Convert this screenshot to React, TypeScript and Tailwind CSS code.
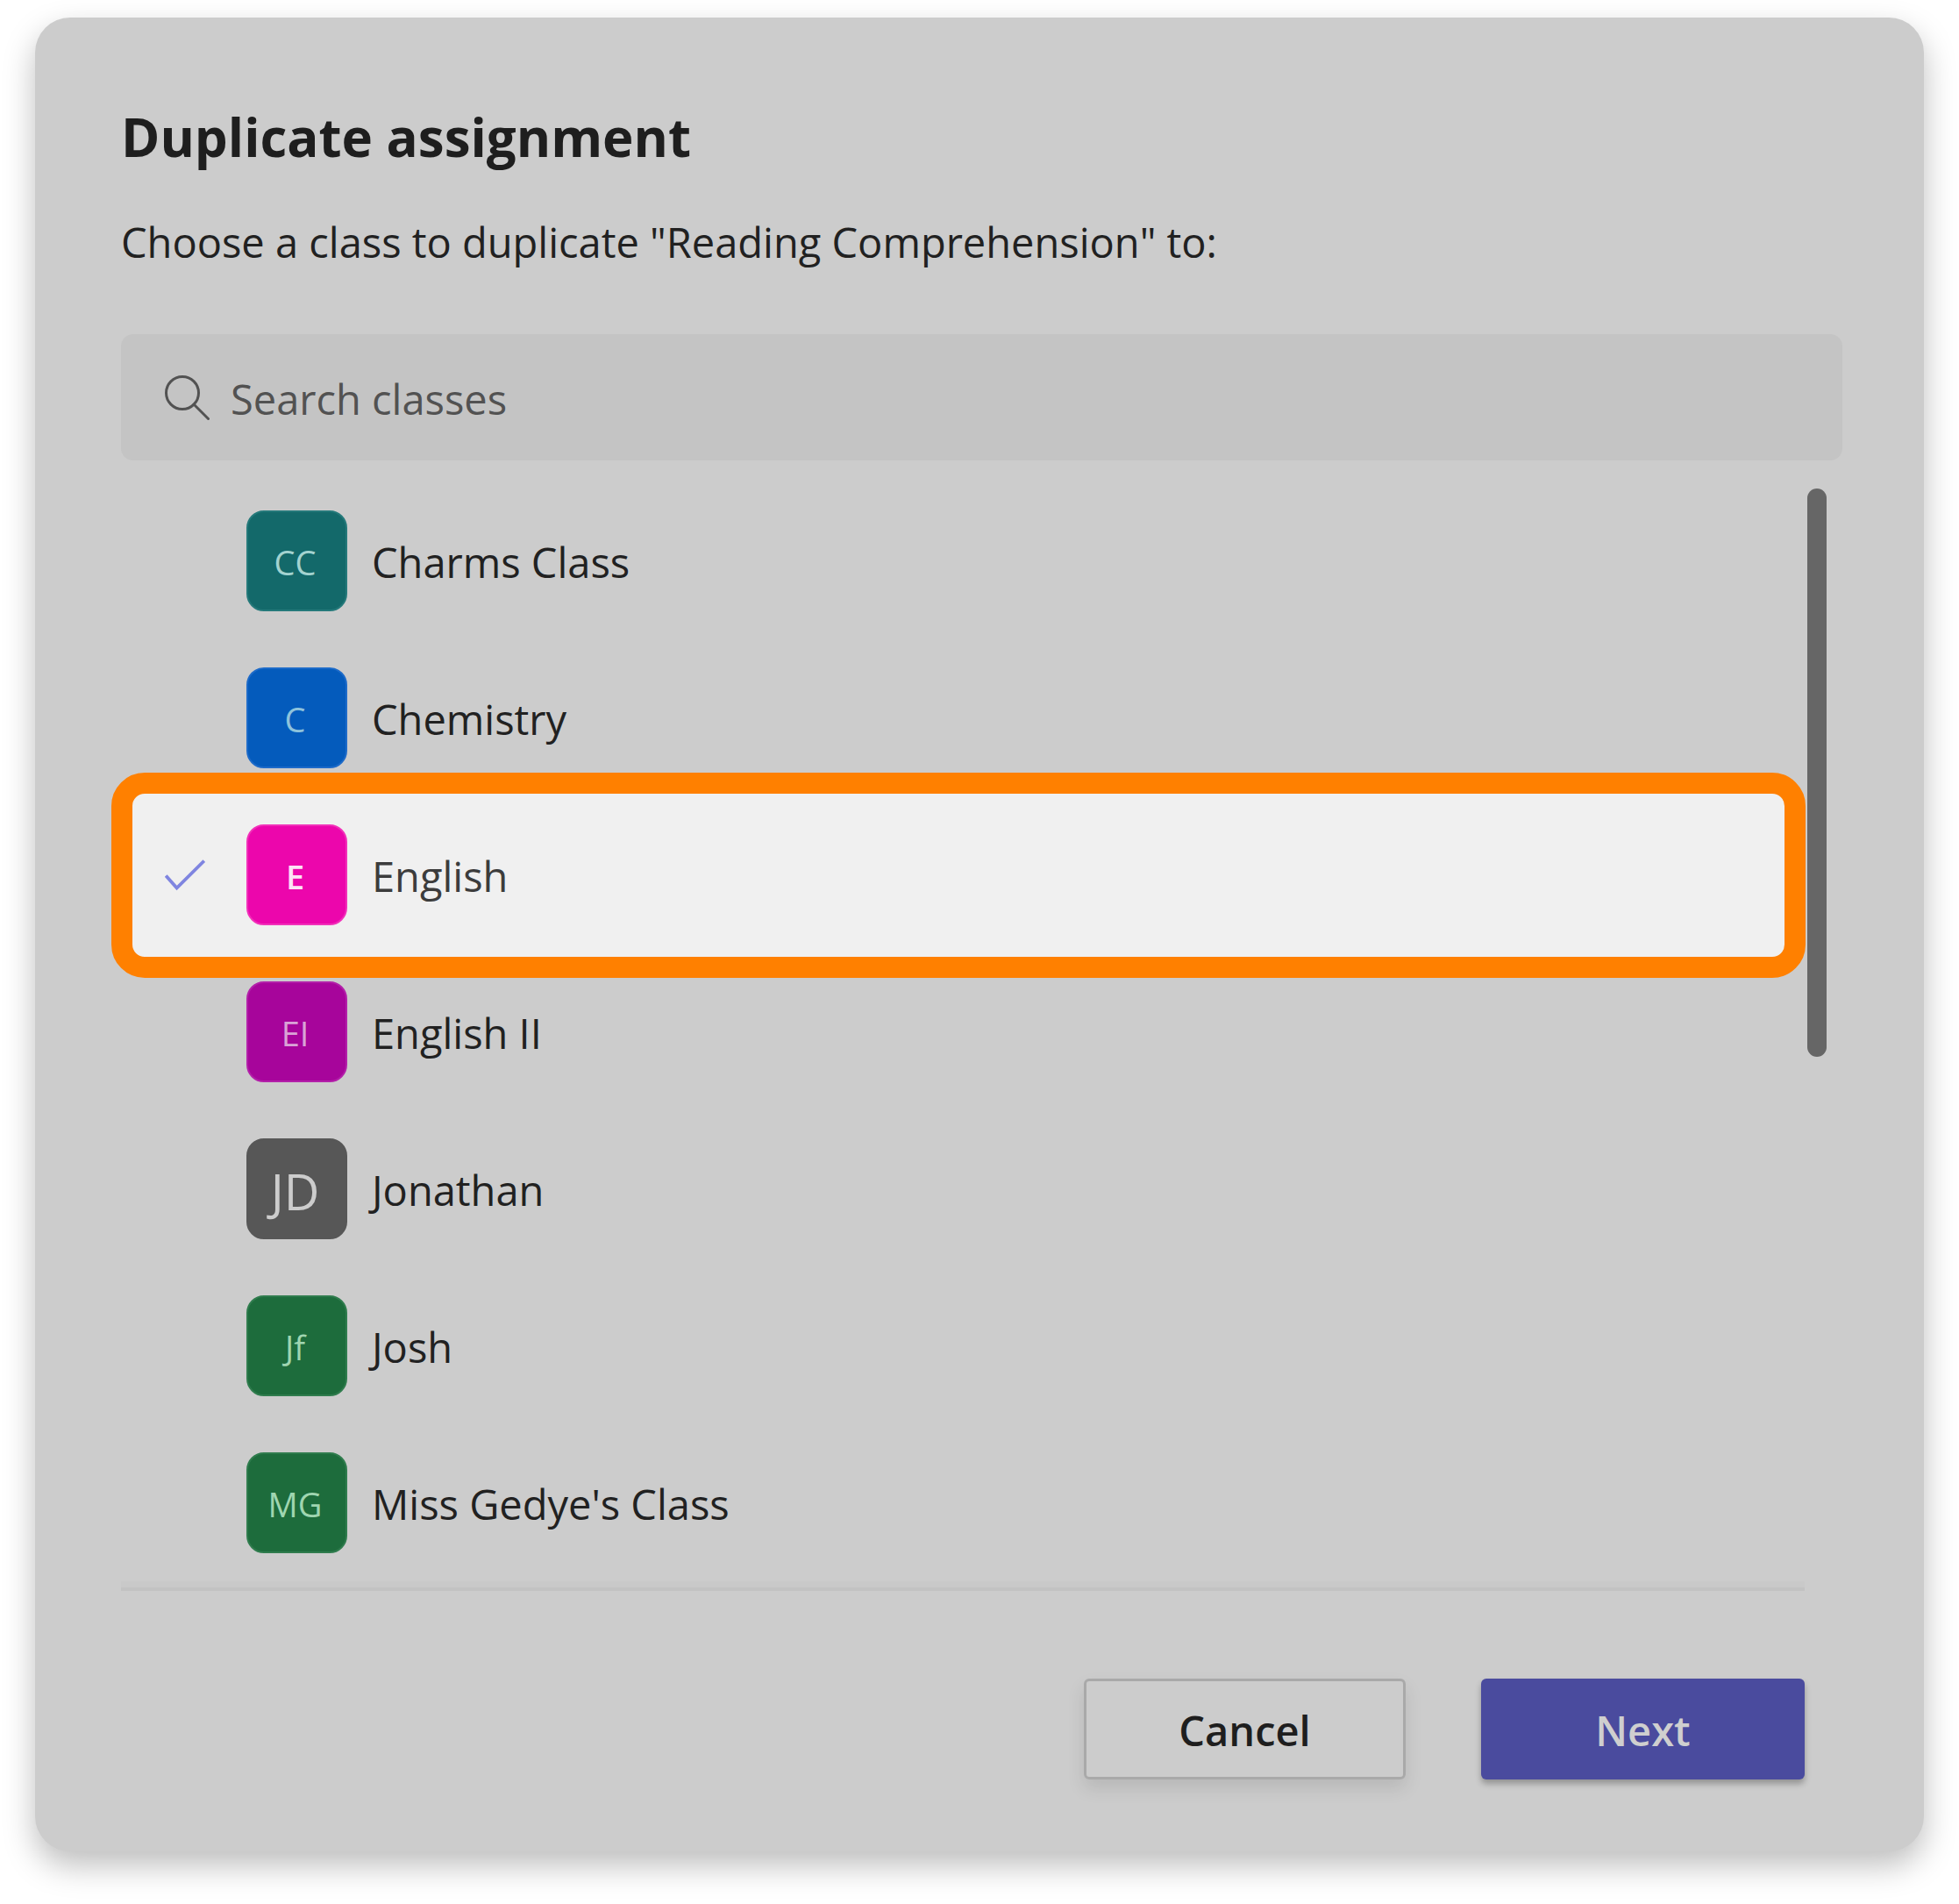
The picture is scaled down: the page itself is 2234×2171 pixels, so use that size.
import { useState } from 'react';

type ClassItem = {
  id: string;
  name: string;
  initials: string;
  avatar: string;
};

const classes: ClassItem[] = [
  { id: 'charms', name: 'Charms Class', initials: 'CC', avatar: 'bg-[#13696a] border-[#24797a] text-[#a3d3d0] text-[38px]' },
  { id: 'chemistry', name: 'Chemistry', initials: 'C', avatar: 'bg-[#045bbc] border-[#1c6ac9] text-[#8ec3dc] text-[38px]' },
  { id: 'english', name: 'English', initials: 'E', avatar: 'bg-[#ec06ac] border-[#f22fb9] text-[#fde3f6] text-[38px] font-semibold' },
  { id: 'english-2', name: 'English II', initials: 'EI', avatar: 'bg-[#a7059b] border-[#b31fa9] text-[#d9a3d6] text-[38px]' },
  { id: 'jonathan', name: 'Jonathan', initials: 'JD', avatar: 'bg-[#575757] border-[#575757] text-[#cccccc] text-[56px]' },
  { id: 'josh', name: 'Josh', initials: 'Jf', avatar: 'bg-[#1d6c3c] border-[#2f7c4d] text-[#9fd5b0] text-[38px]' },
  { id: 'gedye', name: "Miss Gedye's Class", initials: 'MG', avatar: 'bg-[#1d6c3c] border-[#2f7c4d] text-[#9fd5b0] text-[38px]' },
];

export default function App() {
  const [query, setQuery] = useState('');
  const [selected, setSelected] = useState('english');

  const visible = classes.filter(c => c.name.toLowerCase().includes(query.toLowerCase()));

  return (
    <div className="bg-white px-10 pt-5 pb-[60px] font-['Open_Sans','Noto_Sans',sans-serif] text-[#212121]">
      <main className="rounded-[40px] bg-[#cccccc] pt-24 pr-[93px] pb-[82px] pl-[98px] shadow-[0_16px_36px_rgba(0,0,0,0.26)]">
        <h1 className="text-[60px] leading-[80px] font-bold text-[#1e1e1e]">Duplicate assignment</h1>
        <p className="mt-12 text-[47px] leading-[64px]">Choose a class to duplicate "Reading Comprehension" to:</p>

        {/* Search box */}
        <label className="mt-[73px] flex h-36 items-center gap-6 rounded-[14px] bg-[#c4c4c4] pl-[50px]">
          <SearchIcon />
          <input
            type="text"
            aria-label="Search classes"
            placeholder="Search classes"
            value={query}
            onChange={e => setQuery(e.target.value)}
            className="h-[68px] min-w-0 flex-1 bg-transparent pt-1 text-[47px] outline-none placeholder:text-[#525252]"
          />
        </label>

        {/* Class list */}
        <div className="mt-[25px] flex gap-0.5 pr-[18px]">
          <ul className="min-w-0 flex-1">
            {visible.map(c => (
              <ClassRow key={c.id} item={c} checked={c.id === selected} onSelect={() => setSelected(c.id)} />
            ))}
          </ul>
          <div className="mt-[7px] h-[648px] w-[22px] rounded-full bg-[#666666]" />
        </div>

        <div className="mr-[43px] h-[11px] border-b-4 border-[#c2c2c2] bg-[#c9c9c9]" />

        {/* Footer */}
        <div className="mt-[100px] mr-[43px] flex justify-end gap-[86px]">
          <button
            type="button"
            className="h-[115px] w-[367px] rounded-md border-[3px] border-[#a9a9a9] pt-1 text-[47px] font-semibold text-[#1e1e1e] shadow-[0_10px_20px_rgba(0,0,0,0.1)]"
          >
            Cancel
          </button>
          <button
            type="button"
            className="h-[115px] w-[369px] rounded-md bg-[#4a4b9e] pt-1 text-[47px] font-semibold text-[#cfcfcf] shadow-[0_5px_7px_rgba(0,0,0,0.28)]"
          >
            Next
          </button>
        </div>
      </main>
    </div>
  );
}

function ClassRow({ item, checked, onSelect }: { item: ClassItem, checked: boolean, onSelect: () => void }) {
  return (
    <li className="relative">
      {checked && (
        <div className="absolute -top-[27px] right-0 -bottom-7 -left-[11px] rounded-[38px] border-[24px] border-[#ff8000] bg-[#f0f0f0]" />
      )}
      <label className="relative flex h-[179px] cursor-pointer items-center pl-[50px]">
        <input type="radio" name="class" value={item.id} checked={checked} onChange={onSelect} className="sr-only" />
        <span className="w-[93px] shrink-0">{checked && <CheckIcon />}</span>
        <span className={`flex size-[115px] shrink-0 items-center justify-center rounded-[20px] border-2 pt-1 pr-1 ${item.avatar}`}>
          {item.initials}
        </span>
        <span className={`ml-7 pt-0.5 text-[47px] leading-[64px] ${checked ? 'text-[#3c3c3c]' : ''}`}>{item.name}</span>
      </label>
    </li>
  );
}

function SearchIcon() {
  return (
    <svg viewBox="0 0 51 51" className="size-[51px] shrink-0" fill="none" stroke="#525252" strokeWidth="3">
      <circle cx="20" cy="20" r="18.5" />
      <path d="M33 33 49.5 49.5" strokeLinecap="round" />
    </svg>
  );
}

function CheckIcon() {
  return (
    <svg viewBox="0 0 46 36" className="h-9 w-[46px]" fill="none" stroke="#7f85e0" strokeWidth="3.8">
      <path d="M1.2 18.5 13.6 32.5 44.8 1.5" />
    </svg>
  );
}
